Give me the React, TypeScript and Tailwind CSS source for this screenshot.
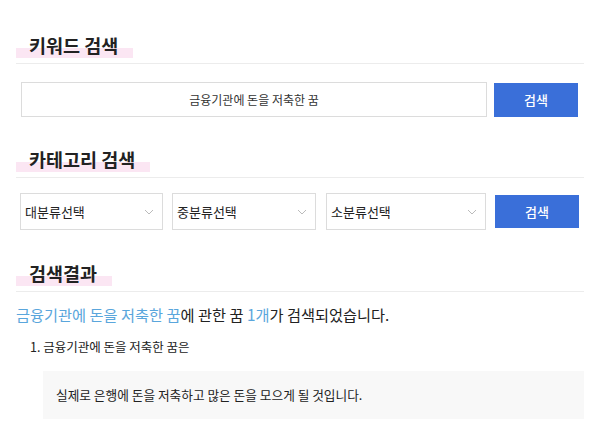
import React from "react";

const font = { fontFamily: '"Noto Sans CJK KR", "Noto Sans", sans-serif' };

function Heading({ children }: { children: React.ReactNode }) {
  return (
    <div className="border-b border-[#ececec] pb-[5px]">
      <span className="inline-block h-[25px] pl-[13px] pr-[15px] text-[18.5px] font-bold leading-[24px] text-[#222] bg-[linear-gradient(transparent_62%,#fbe6f3_62%)]">
        {children}
      </span>
    </div>
  );
}

function Chevron() {
  return (
    <svg width="10" height="6" viewBox="0 0 10 6" className="shrink-0">
      <polyline points="1,1 5,5 9,1" fill="none" stroke="#bbb" strokeWidth="1" />
    </svg>
  );
}

function Select({ label, w }: { label: string; w: string }) {
  return (
    <div className={`flex h-[37px] items-center justify-between border border-[#dcdcdc] bg-white pl-[4px] pr-[8px] ${w}`}>
      <span className="text-[13px] text-[#222]">{label}</span>
      <Chevron />
    </div>
  );
}

export default function App() {
  return (
    <div className="h-[444px] w-[600px] overflow-hidden bg-white px-[16px] pt-[33px]" style={font}>
      <Heading>키워드 검색</Heading>
      <div className="mt-[18px] flex items-center gap-[7px] pl-[5px]">
        <div className="flex h-[35px] w-[466px] items-center justify-center border border-[#dcdcdc] text-[12px] text-[#333]">
          금융기관에 돈을 저축한 꿈
        </div>
        <button className="h-[34px] w-[84px] bg-[#3a6fd9] text-[13px] font-medium text-white">검색</button>
      </div>

      <div className="mt-[30px]">
        <Heading>카테고리 검색</Heading>
      </div>
      <div className="mt-[15px] flex items-center pl-[4px]">
        <Select label="대분류선택" w="w-[143px]" />
        <div className="w-[9px]" />
        <Select label="중분류선택" w="w-[144px]" />
        <div className="w-[10px]" />
        <Select label="소분류선택" w="w-[160px]" />
        <div className="w-[9px]" />
        <button className="h-[33px] w-[84px] bg-[#3a6fd9] text-[13px] font-medium text-white">검색</button>
      </div>

      <div className="mt-[31px]">
        <Heading>검색결과</Heading>
      </div>
      <p className="mt-[11px] text-[15.25px] leading-[22px] text-[#222]">
        <span className="text-[#5aa6dc]">금융기관에 돈을 저축한 꿈</span>에 관한 꿈{" "}
        <span className="text-[#5aa6dc]">1개</span>가 검색되었습니다.
      </p>
      <p className="mt-[13px] pl-[14px] text-[12.5px] leading-[18px] text-[#222]">1. 금융기관에 돈을 저축한 꿈은</p>
      <div className="ml-[27px] mt-[15px] flex h-[48px] items-center bg-[#f8f8f8] pl-[13px] text-[12.7px] text-[#222]">
        실제로 은행에 돈을 저축하고 많은 돈을 모으게 될 것입니다.
      </div>
    </div>
  );
}
